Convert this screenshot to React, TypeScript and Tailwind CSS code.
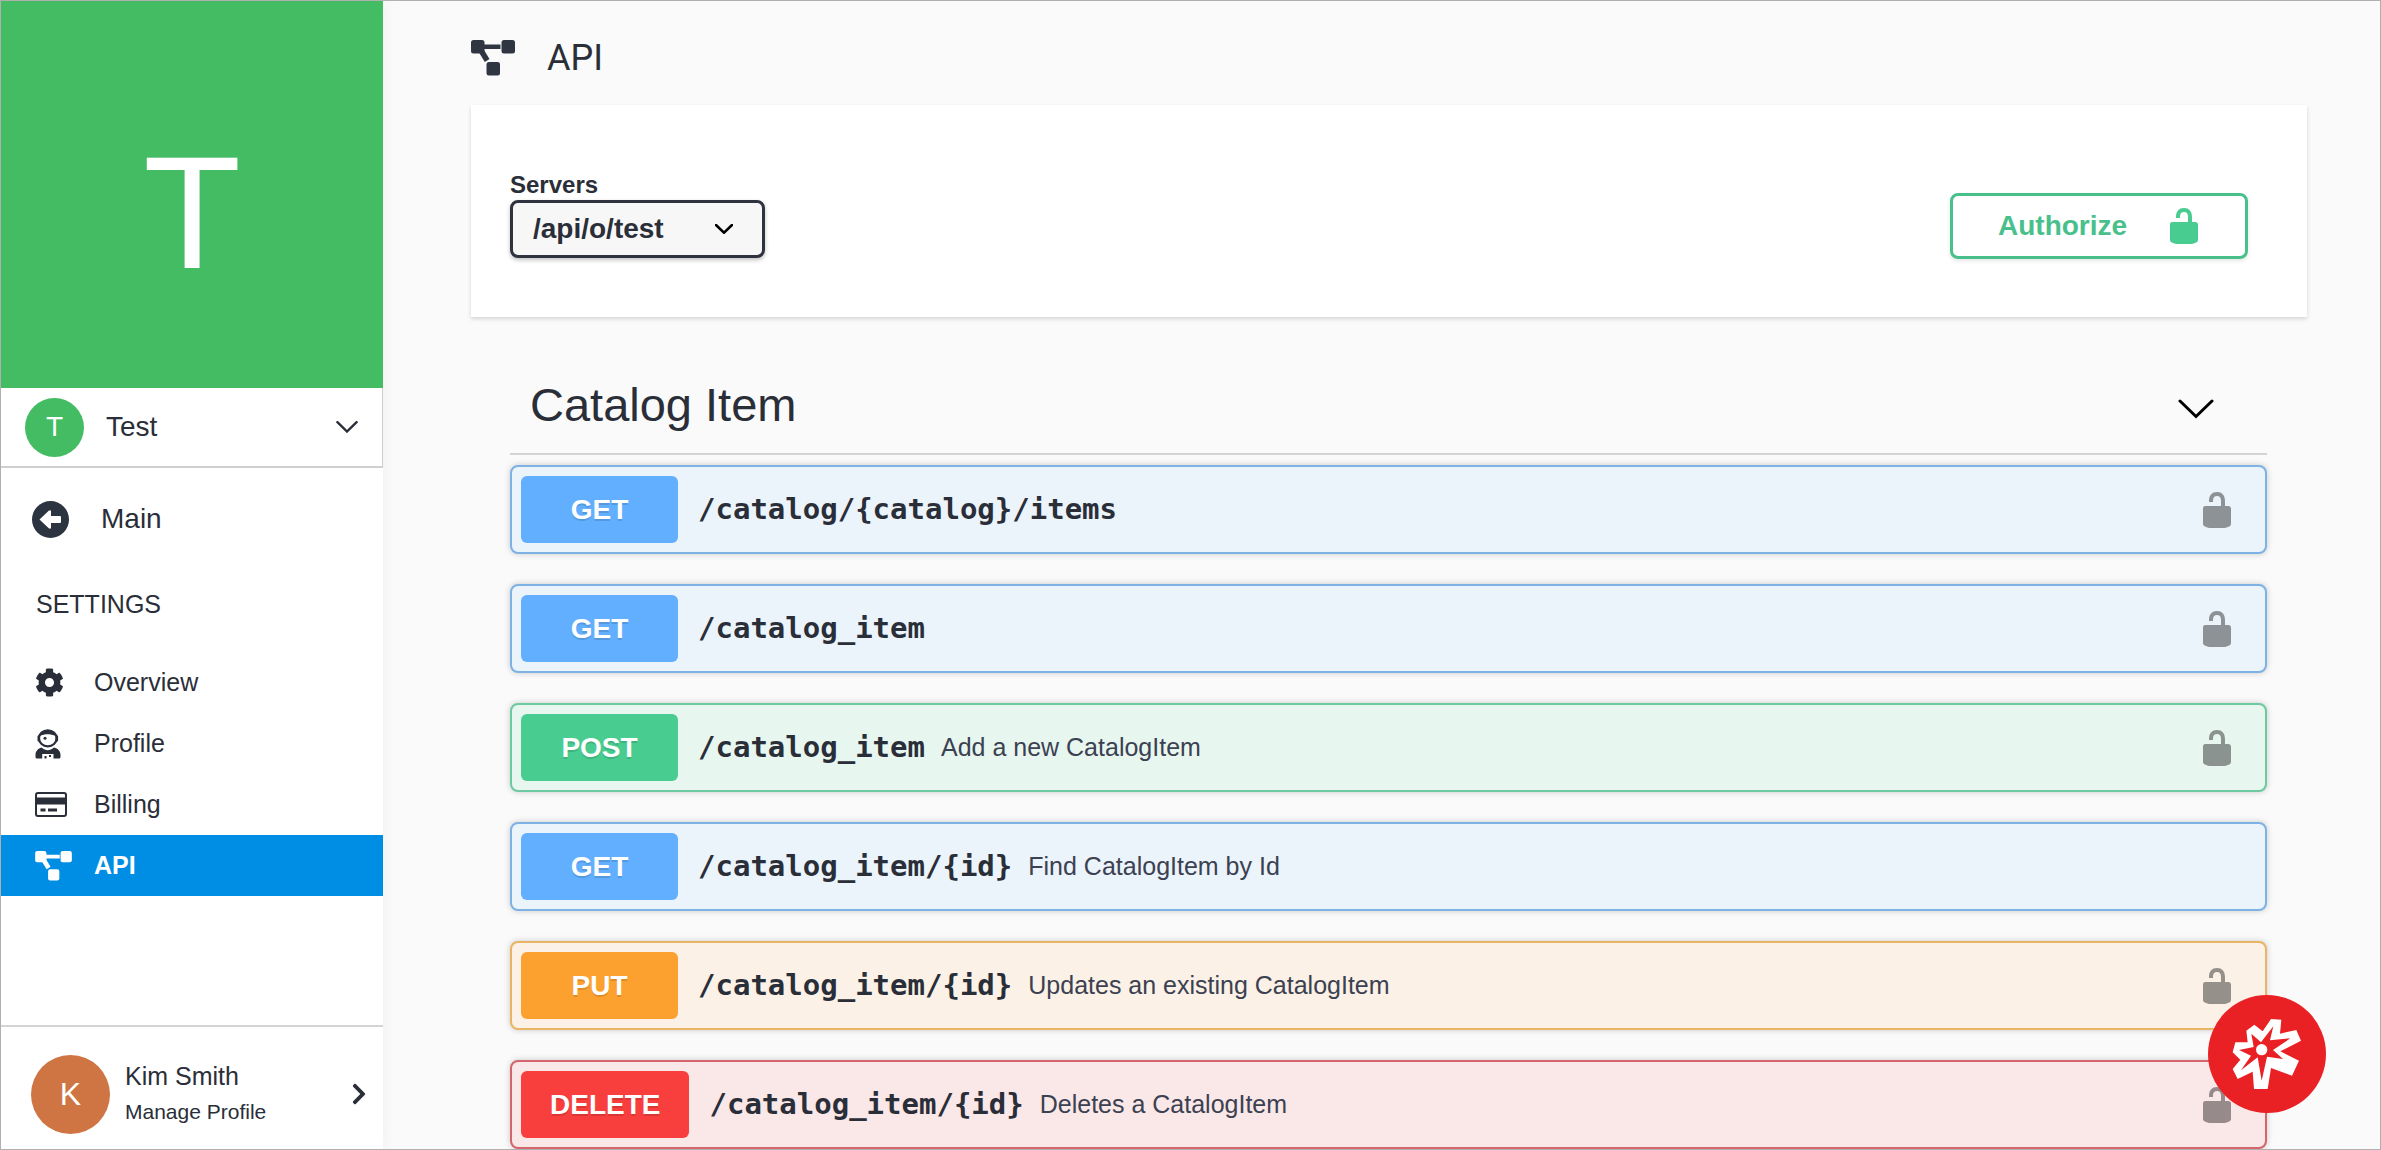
import { FaCog, FaChevronRight } from "react-icons/fa";

type Method = "GET" | "POST" | "PUT" | "DELETE";

interface Operation {
  method: Method;
  path: string;
  summary?: string;
  lock: boolean;
}

const operations: Operation[] = [
  { method: "GET", path: "/catalog/{catalog}/items", lock: true },
  { method: "GET", path: "/catalog_item", lock: true },
  { method: "POST", path: "/catalog_item", summary: "Add a new CatalogItem", lock: true },
  { method: "GET", path: "/catalog_item/{id}", summary: "Find CatalogItem by Id", lock: false },
  { method: "PUT", path: "/catalog_item/{id}", summary: "Updates an existing CatalogItem", lock: true },
  { method: "DELETE", path: "/catalog_item/{id}", summary: "Deletes a CatalogItem", lock: true },
];

const rowStyles: Record<Method, string> = {
  GET: "border-[#7fb2e4] bg-[#ebf3fb]",
  POST: "border-[#6cc9a0] bg-[#e8f6f0]",
  PUT: "border-[#e9b565] bg-[#fbf1e6]",
  DELETE: "border-[#d4656c] bg-[#fae7e7]",
};

const badgeStyles: Record<Method, string> = {
  GET: "bg-[#61affe]",
  POST: "bg-[#49cc90]",
  PUT: "bg-[#fca130]",
  DELETE: "bg-[#f93e3e]",
};

function DiagramIcon({ className }: { className: string }) {
  return (
    <svg viewBox="0 0 44 36" className={className} fill="currentColor" aria-hidden="true">
      <rect x="0" y="0" width="13.5" height="13.5" rx="2.5" />
      <rect x="30.5" y="0" width="13.5" height="13.5" rx="2.5" />
      <rect x="15.5" y="22" width="13.5" height="13.5" rx="2.5" />
      <rect x="12" y="4.5" width="17.5" height="4.5" />
      <path d="M8 12.500 13 10 18.500 19 13.800 22Z" />
    </svg>
  );
}

function LockIcon({ className }: { className: string }) {
  return (
    <svg viewBox="3 1 14 18" className={className} fill="currentColor" aria-hidden="true">
      <path d="M15.8 8H14V5.6C14 2.703 12.665 1 10 1 7.334 1 6 2.703 6 5.6V6h2v-.801C8 3.754 8.797 3 10 3c1.203 0 2 .754 2 2.199V8H4c-.553 0-1 .646-1 1.199V17c0 .549.428 1.139.951 1.307l1.197.387C5.672 18.861 6.55 19 7.1 19h5.8c.549 0 1.428-.139 1.951-.307l1.196-.387c.524-.167.953-.757.953-1.306V9.199C17 8.646 16.352 8 15.8 8z" />
    </svg>
  );
}

function Chevron({ className, strokeWidth }: { className: string; strokeWidth: number }) {
  return (
    <svg viewBox="0 0 36 20" className={className} fill="none" stroke="currentColor" strokeWidth={strokeWidth} strokeLinecap="round" aria-hidden="true">
      <path d="M2 2 18 17.500 34 2" />
    </svg>
  );
}

function BackIcon() {
  return (
    <svg viewBox="0 0 37 37" className="size-[37px]" aria-hidden="true">
      <circle cx="18.500" cy="18.500" r="18.500" fill="#2b3440" />
      <path d="M7.500 18.500 17 9.500H19V15H28Q29 15 29 16V21Q29 22 28 22H19V27.500H17Z" fill="white" />
    </svg>
  );
}

function AstronautIcon() {
  return (
    <svg viewBox="0 0 26 30" className="h-[30px] w-[26px]" aria-hidden="true">
      <ellipse cx="12.800" cy="9.300" rx="8.800" ry="8" fill="none" stroke="currentColor" strokeWidth="2.200" />
      <path d="M4.500 7C6 0 19.500 0 21 7 15 4.500 10 4.500 4.500 7Z" fill="currentColor" />
      <rect x="2.500" y="6.500" width="2.500" height="6" rx="1" fill="currentColor" />
      <rect x="20.600" y="6.500" width="2.500" height="6" rx="1" fill="currentColor" />
      <circle cx="10" cy="9.300" r="1.500" fill="currentColor" />
      <path d="M6.500 18.500C11 22 14.600 22 19 18.500 23 19.500 25.500 22 25.500 26V28Q25.500 29.500 24 29.500H18.500V25H7.200V29.500H2Q.5 29.500.5 28V26C.5 22 3 19.500 6.500 18.500Z" fill="currentColor" />
      <rect x="9.500" y="27" width="2" height="2.500" fill="currentColor" />
      <rect x="14" y="26" width="2" height="2" fill="currentColor" />
    </svg>
  );
}

function CardIcon() {
  return (
    <svg viewBox="0 0 32 25" className="h-[25px] w-8" aria-hidden="true">
      <rect x="1" y="1" width="30" height="23" rx="2" fill="none" stroke="currentColor" strokeWidth="2" />
      <rect x="1" y="5.500" width="30" height="7" fill="currentColor" />
      <rect x="5.500" y="16.500" width="5" height="3" fill="currentColor" />
      <rect x="13" y="16.500" width="9" height="3" fill="currentColor" />
    </svg>
  );
}

const navItems = [
  { label: "Overview", icon: <FaCog className="size-[29px]" />, active: false },
  { label: "Profile", icon: <AstronautIcon />, active: false },
  { label: "Billing", icon: <CardIcon />, active: false },
  { label: "API", icon: <DiagramIcon className="h-[30px] w-[37px]" />, active: true },
];

function Sidebar() {
  return (
    <aside className="flex w-[382px] shrink-0 flex-col bg-white shadow-[0_0_14px_rgba(0,0,0,0.05)]">
      <div className="flex h-[387px] shrink-0 items-center justify-center bg-[#43bc63] pt-9 text-[160px] leading-none text-white">T</div>
      <button type="button" className="flex h-20 shrink-0 items-center border-r border-b-2 border-[#cfcfcf] px-6 text-[28px]">
        <span className="flex size-[59px] items-center justify-center rounded-full bg-[#43bc63] text-white">T</span>
        <span className="ml-[22px]">Test</span>
        <Chevron className="ml-auto h-3 w-[22px]" strokeWidth={4} />
      </button>
      <a href="#main" className="mt-7 flex h-[46px] items-center pl-[31px] text-[28px]">
        <BackIcon />
        <span className="ml-8">Main</span>
      </a>
      <h2 className="mt-11 mb-[30px] pl-[35px] text-[25px] leading-9">SETTINGS</h2>
      <nav>
        {navItems.map((item) => (
          <a
            key={item.label}
            href={"#" + item.label.toLowerCase()}
            className={item.active ? "flex h-[61px] items-center bg-[#008ee4] pl-[34px] text-[25px] font-bold text-white" : "flex h-[61px] items-center pl-[34px] text-[25px]"}
          >
            <span className="w-[59px]">{item.icon}</span>
            {item.label}
          </a>
        ))}
      </nav>
      <a href="#profile" className="mt-auto flex h-[124px] items-center border-t-2 border-[#d4d4d4] pt-3 pr-3 pl-[30px]">
        <span className="flex size-[79px] items-center justify-center rounded-full bg-[#ce7543] text-[32px] text-white">K</span>
        <span className="ml-[15px] flex flex-col">
          <span className="text-[25px] leading-9">Kim Smith</span>
          <span className="text-[21px] leading-9">Manage Profile</span>
        </span>
        <FaChevronRight className="ml-auto size-6" />
      </a>
    </aside>
  );
}

function OperationRow({ op }: { op: Operation }) {
  return (
    <li>
      <button
        type="button"
        className={"flex h-[89px] w-full items-center rounded-lg border-2 pr-[34px] pl-[9px] text-left shadow-[0_0_6px_rgba(0,0,0,0.2)] " + rowStyles[op.method]}
      >
        <span
          className={"flex h-[67px] min-w-[157px] items-center justify-center rounded-md px-[29px] text-[28px] font-bold text-white [text-shadow:0_2px_0_rgba(0,0,0,0.12)] " + badgeStyles[op.method]}
        >
          {op.method}
        </span>
        <span className="ml-5 font-['DejaVu_Sans_Mono',monospace] text-[29px] font-bold">{op.path}</span>
        <span className="ml-4 text-[25px] text-[#3b4151]">{op.summary}</span>
        {op.lock && <LockIcon className="ml-auto h-9 w-7 text-black/40" />}
      </button>
    </li>
  );
}

function ChatLauncher() {
  return (
    <button type="button" aria-label="Open assistant" className="absolute right-[54px] bottom-9 size-[118px] rounded-full bg-[#e92024]">
      <svg viewBox="23 18 354 354" className="size-full" aria-hidden="true">
        <path
          d="M212 90 243 92 239 134 288 123 302 155 240 187 296 215 275 260 212 237 202 300H161L157 248 112 270 97 240 120 212 97 190 105 160 142 160 138 125 162 107 187 127Z"
          fill="white"
        />
        <path
          d="M219 112 209 154 270 148 218 183 248 210 200 203 184 275 172 205 122 244 152 200 116 183 160 174 153 134 182 160Z"
          fill="#e92024"
        />
        <circle cx="184" cy="182" r="17" fill="white" />
      </svg>
    </button>
  );
}

export default function App() {
  return (
    <div className="relative flex h-screen overflow-hidden border border-[#b0b0b0] bg-[#fafafa] font-['Liberation_Sans',Arial,sans-serif] text-[#2a2e38]">
      <Sidebar />
      <main className="min-w-0 flex-1 pr-[73px] pl-[88px]">
        <header className="flex h-[104px] items-center pt-[10px]">
          <DiagramIcon className="h-9 w-11 text-[#2f3642]" />
          <h1 className="ml-8 font-[Roboto,sans-serif] text-[36px]">API</h1>
        </header>
        <section className="flex h-[212px] items-center justify-between bg-white pr-[59px] pl-[39px] shadow-[0_2px_4px_rgba(0,0,0,0.15)]">
          <div className="flex flex-col pt-[6px]">
            <label htmlFor="servers" className="text-2xl leading-[30px] font-bold">Servers</label>
            <div className="relative flex items-center">
              <select id="servers" defaultValue="/api/o/test" className="h-[58px] w-[255px] appearance-none rounded-lg border-[3px] border-[#2f3340] bg-[#f7f7f7] pl-5 text-[28px] font-bold shadow-[0_2px_4px_rgba(0,0,0,0.25)]">
                <option>/api/o/test</option>
              </select>
              <Chevron className="pointer-events-none absolute right-8 h-[10px] w-[18px] text-black" strokeWidth={5} />
            </div>
          </div>
          <button type="button" className="mt-[30px] flex h-[66px] w-[298px] items-center justify-between rounded-lg border-[3px] border-[#49c08c] pr-[47px] pl-[45px] text-[28px] font-bold text-[#49c08c] shadow-[0_2px_4px_rgba(0,0,0,0.1)]">
            Authorize
            <LockIcon className="h-9 w-7 text-[#49cc90]" />
          </button>
        </section>
        <section className="mt-10 pr-10 pl-[39px]">
          <h2>
            <button type="button" className="flex h-[98px] w-full items-center justify-between border-b-2 border-[#d2d4d6] pr-[53px] pl-5 text-[47px]">
              Catalog Item
              <Chevron className="mt-2 h-5 w-9 text-black" strokeWidth={3} />
            </button>
          </h2>
          <ul className="mt-[10px] flex flex-col gap-[30px]">
            {operations.map((op) => (
              <OperationRow key={op.method + op.path} op={op} />
            ))}
          </ul>
        </section>
      </main>
      <ChatLauncher />
    </div>
  );
}
